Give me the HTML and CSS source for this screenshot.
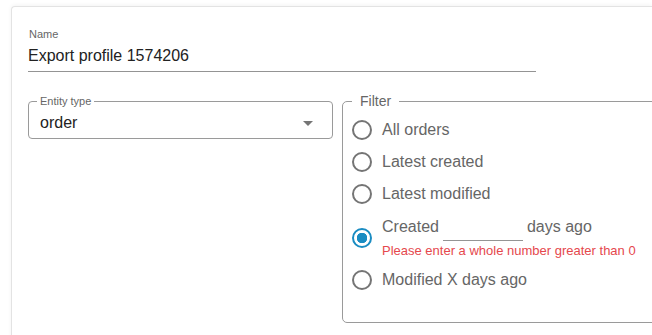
FILE: index.html
```html
<!DOCTYPE html>
<html>

<head>
    <title>Export profile</title>
    <link rel="stylesheet" href="styles.css">
</head>

<body>
    <div class="card">
        <div class="name-field">
            <div class="field-label">Name</div>
            <div class="field-value">Export profile 1574206</div>
        </div>

        <div class="options-row">
            <fieldset class="select-box">
                <legend>Entity type</legend>
                <div class="select-value">
                    <span>order</span>
                    <svg class="select-arrow" width="10" height="5" viewBox="7 10 10 5">
                        <path d="M7 10l5 5 5-5z" fill="#757575" />
                    </svg>
                </div>
            </fieldset>

            <fieldset class="filter-box">
                <legend>Filter</legend>

                <div class="radio-row">
                    <span class="radio"></span>
                    <span class="radio-label">All orders</span>
                </div>
                <div class="radio-row">
                    <span class="radio"></span>
                    <span class="radio-label">Latest created</span>
                </div>
                <div class="radio-row">
                    <span class="radio"></span>
                    <span class="radio-label">Latest modified</span>
                </div>
                <div class="radio-row radio-row-tall">
                    <span class="radio radio-checked"></span>
                    <div class="radio-label">
                        <div>Created<span class="days-input"></span>days ago</div>
                        <div class="error-text">Please enter a whole number greater than 0</div>
                    </div>
                </div>
                <div class="radio-row">
                    <span class="radio"></span>
                    <span class="radio-label">Modified X days ago</span>
                </div>
            </fieldset>
        </div>
    </div>
</body>

</html>
```

FILE: styles.css
```css
html,
body {
    margin: 0;
    padding: 0;
    overflow: hidden;
}

body {
    background-color: #fff;
    font-family: "Liberation Sans", Arial, sans-serif;
    color: #222;
}

.card {
    margin: 6px 0 0 11px;
    min-height: 340px;
    box-sizing: border-box;
    padding: 21px 0 0 16px;
    border: 1px solid #e3e3e3;
    border-right: 0;
    border-radius: 4px 0 0 0;
    background-color: #fff;
    box-shadow: 0 -1px 4px rgba(0, 0, 0, 0.05);
    overflow: hidden;
}

/* Name input */
.name-field {
    width: 508px;
}

.field-label {
    font-size: 11px;
    line-height: 13px;
    color: #666;
    padding-left: 1px;
}

.field-value {
    font-size: 16px;
    line-height: 22px;
    padding: 4px 0 4px 0;
    border-bottom: 1px solid #949494;
    color: #222;
}

.options-row {
    display: flex;
    align-items: flex-start;
    gap: 9px;
    margin-top: 21px;
}

/* Entity type select */
.select-box {
    margin: 2px 0 0 0;
    width: 305px;
    box-sizing: border-box;
    padding: 6px 19px 5px 11px;
    border: 1px solid #9a9a9a;
    border-radius: 4px;
    flex-shrink: 0;
}

.select-box legend {
    font-size: 11px;
    line-height: 12px;
    color: #666;
    padding: 0 3px;
    margin-left: -3px;
}

.select-value {
    display: flex;
    align-items: center;
    justify-content: space-between;
    font-size: 16px;
    line-height: 20px;
    color: #222;
}

.select-arrow {
    display: block;
}

/* Filter radios */
.filter-box {
    margin: 0;
    width: 330px;
    box-sizing: border-box;
    padding: 5px 0 26px 9px;
    border: 1px solid #9a9a9a;
    border-radius: 5px;
    flex-shrink: 0;
}

.filter-box legend {
    font-size: 14px;
    line-height: 16px;
    color: #666;
    padding: 0 8px;
    margin-left: 0;
}

.radio-row {
    display: flex;
    align-items: center;
    font-size: 16px;
    line-height: 32px;
    color: #666;
}

.radio-row-tall {
    align-items: flex-start;
    padding: 1px 0 6px 0;
}

.radio {
    width: 20px;
    height: 20px;
    box-sizing: border-box;
    border: 2px solid #757575;
    border-radius: 50%;
    margin-right: 10px;
    flex-shrink: 0;
}

.radio-row-tall .radio {
    margin-top: 17px;
}

.radio-checked {
    border-color: #1a8cc2;
    background: radial-gradient(circle, #1a8cc2 0, #1a8cc2 5px, transparent 5.5px);
}

.days-input {
    display: inline-block;
    width: 80px;
    height: 0;
    border-bottom: 1px solid #949494;
    margin: 0 4px;
    vertical-align: -9px;
}

.error-text {
    font-size: 13px;
    line-height: 15px;
    color: #e5484d;
}
```
